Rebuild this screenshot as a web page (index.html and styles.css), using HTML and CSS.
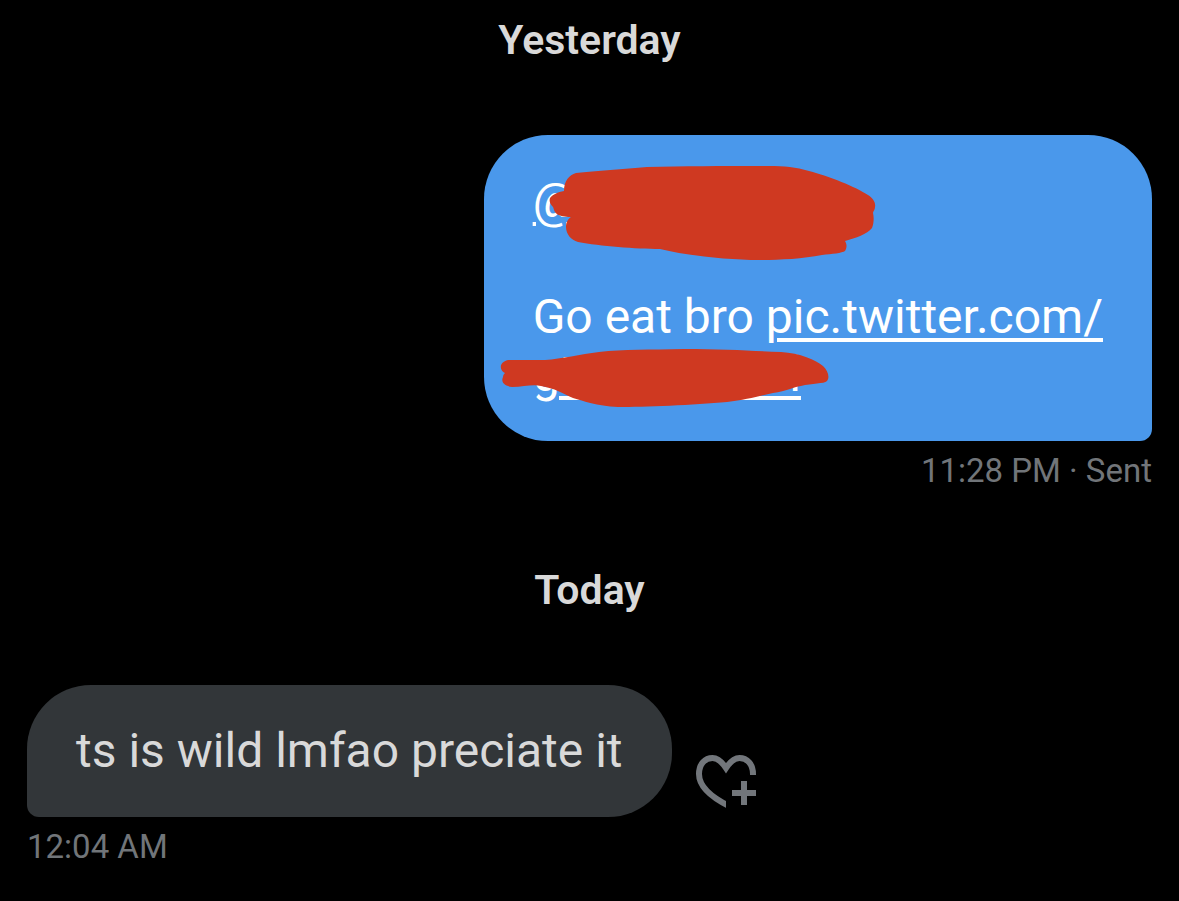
FILE: index.html
```html
<!DOCTYPE html>
<html lang="en">
<head>
  <meta charset="UTF-8">
  <meta name="viewport" content="width=device-width, initial-scale=1">
  <title>Messages</title>
  <link rel="stylesheet" href="styles.css">
</head>
<body>
  <main class="chat">
    <h2 class="day">Yesterday</h2>

    <div class="message sent">
      <div class="bubble">
        <p><a href="#">@&nbsp;&nbsp;&nbsp;&nbsp;&nbsp;&nbsp;&nbsp;&nbsp;&nbsp;&nbsp;</a></p>
        <br>
        <p>Go eat bro <a href="#">pic.twitter.com/<br>gE&nbsp;&nbsp;&nbsp;&nbsp;&nbsp;&nbsp;&nbsp;&nbsp;&nbsp;&nbsp;&nbsp;&nbsp;&nbsp;&nbsp;&nbsp;&nbsp;&nbsp;l</a></p>
        <svg class="marker" viewBox="0 0 669 306" aria-hidden="true">
          <path d="M92 38C112 36 140 34 163 32C200 31 240 31 285 31C300 31 312 32 325 36C345 41 372 52 384 60C389 63 392 68 391 72C391 75 389 76 389 78C390 82 390 88 388 93C383 99 372 103 361 106C363 109 363 113 361 116C358 118 348 119 338 120C318 124 294 125 275 125C245 125 205 121 176 114C152 114 116 111 94 107C87 105 82 99 82 92C82 87 84 84 87 82C81 82 75 81 73 79C70 77 70 74 69 72C66 69 65 66 66 63C68 60 74 57 80 56C80 46 85 40 92 38Z"/>
          <path d="M24 225H61C78 224 96 219 115 217C140 214 165 215 200 214C240 214 270 216 297 217C316 218 332 225 339 231C344 236 346 242 343 246C340 249 328 248 317 251C309 252 303 256 289 258C275 261 262 265 243 267C210 270 160 272 134 272C112 271 100 266 89 263C80 259 70 253 57 251C48 249 40 252 28 252C19 251 17 246 19 242C19 240 20 239 21 238C15 235 15 227 24 225Z"/>
        </svg>
      </div>
      <div class="meta">11:28 PM · Sent</div>
    </div>

    <h2 class="day">Today</h2>

    <div class="message received">
      <div class="row">
        <div class="bubble">
          <p>ts is wild lmfao preciate it</p>
        </div>
        <button class="react" type="button" aria-label="Add reaction">
          <svg viewBox="0 0 61 54" aria-hidden="true">
            <clipPath id="heart-cut">
              <path d="M0 0H61V20H30V54H0Z"/>
            </clipPath>
            <path class="stroke" clip-path="url(#heart-cut)" d="M57 22V19C57 9 51 3 43.500 3C38 3 34 7 30 13C26 7 22 3 16.500 3C9 3 3 9 3 19C3 30 13 41 33 51"/>
            <path class="stroke" d="M48 26V50M36 38H60"/>
          </svg>
        </button>
      </div>
      <div class="meta">12:04 AM</div>
    </div>
  </main>
</body>
</html>
```

FILE: styles.css
```css
body {
  margin: 0;
  background: #000;
  color: #d9d9d9;
  font-family: Roboto, "Liberation Sans", sans-serif;
}

p {
  margin: 0;
}

.chat {
  padding: 16px 27px 34px;
}

.day {
  margin: 0 0 71px;
  font-size: 41px;
  line-height: 48px;
  font-weight: 600;
  text-align: center;
}

.message {
  display: flex;
  flex-direction: column;
  align-items: flex-start;
  gap: 10px;
}

.message.sent {
  align-items: flex-end;
  margin-bottom: 75px;
}

.row {
  display: flex;
  align-items: flex-end;
  gap: 24px;
}

.bubble {
  position: relative;
  padding: 37px 49px;
  border-radius: 64px;
  font-size: 48px;
  line-height: 58px;
}

.sent .bubble {
  background: #4a98eb;
  color: #fff;
  border-bottom-right-radius: 12px;
}

.received .bubble {
  background: #323639;
  border-bottom-left-radius: 12px;
}

.bubble a {
  color: inherit;
  text-decoration: underline;
  text-decoration-thickness: 4px;
  text-underline-offset: 5px;
}

/* red marker strokes over the hidden names */
.marker {
  position: absolute;
  top: 0;
  left: 0;
  width: 669px;
  height: 306px;
  fill: #cf3921;
}

.meta {
  color: #717579;
  font-size: 33px;
  line-height: 40px;
}

.react {
  margin-bottom: 8px;
  padding: 0;
  border: none;
  background: none;
  color: #72767b;
  cursor: pointer;
}

.react svg {
  display: block;
  width: 61px;
  height: 54px;
}

.react .stroke {
  fill: none;
  stroke: currentColor;
  stroke-width: 6;
}
```
